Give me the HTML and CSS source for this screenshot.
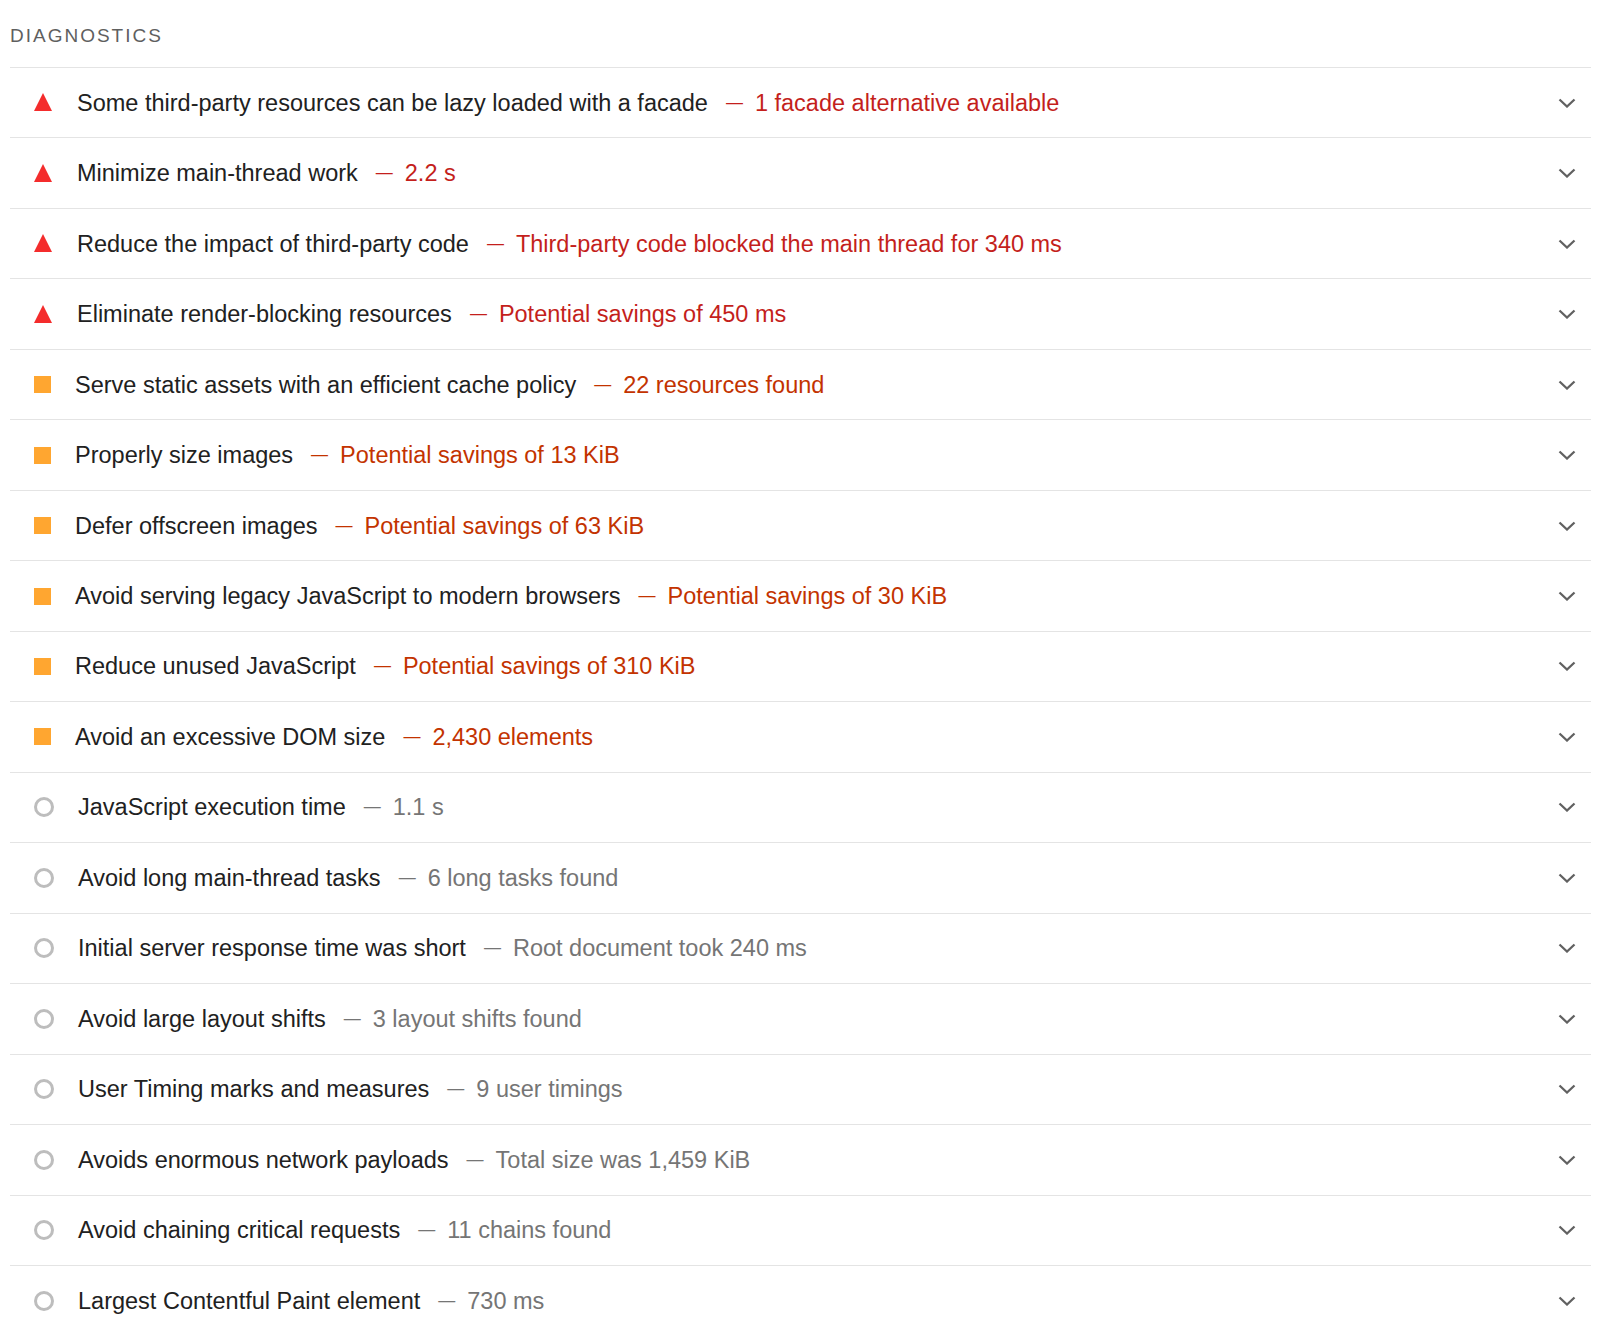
FILE: index.html
```html
<!DOCTYPE html>
<html lang="en">
<head>
<meta charset="utf-8">
<title>Diagnostics</title>
<link rel="stylesheet" href="styles.css">
</head>
<body>
<section class="group">
  <div class="group-header">DIAGNOSTICS</div>
  <div class="audits">
    <div class="audit fail"><span class="icon tri"></span><span class="title">Some third-party resources can be lazy loaded with a facade</span><span class="dash">—</span><span class="value">1 facade alternative available</span><svg class="chev" viewBox="0 0 18 10"><path d="M1.5 1.5 L9 8.5 L16.5 1.5"/></svg></div>
    <div class="audit fail"><span class="icon tri"></span><span class="title">Minimize main-thread work</span><span class="dash">—</span><span class="value">2.2 s</span><svg class="chev" viewBox="0 0 18 10"><path d="M1.5 1.5 L9 8.5 L16.5 1.5"/></svg></div>
    <div class="audit fail"><span class="icon tri"></span><span class="title">Reduce the impact of third-party code</span><span class="dash">—</span><span class="value">Third-party code blocked the main thread for 340 ms</span><svg class="chev" viewBox="0 0 18 10"><path d="M1.5 1.5 L9 8.5 L16.5 1.5"/></svg></div>
    <div class="audit fail"><span class="icon tri"></span><span class="title">Eliminate render-blocking resources</span><span class="dash">—</span><span class="value">Potential savings of 450 ms</span><svg class="chev" viewBox="0 0 18 10"><path d="M1.5 1.5 L9 8.5 L16.5 1.5"/></svg></div>
    <div class="audit average"><span class="icon sq"></span><span class="title">Serve static assets with an efficient cache policy</span><span class="dash">—</span><span class="value">22 resources found</span><svg class="chev" viewBox="0 0 18 10"><path d="M1.5 1.5 L9 8.5 L16.5 1.5"/></svg></div>
    <div class="audit average"><span class="icon sq"></span><span class="title">Properly size images</span><span class="dash">—</span><span class="value">Potential savings of 13 KiB</span><svg class="chev" viewBox="0 0 18 10"><path d="M1.5 1.5 L9 8.5 L16.5 1.5"/></svg></div>
    <div class="audit average"><span class="icon sq"></span><span class="title">Defer offscreen images</span><span class="dash">—</span><span class="value">Potential savings of 63 KiB</span><svg class="chev" viewBox="0 0 18 10"><path d="M1.5 1.5 L9 8.5 L16.5 1.5"/></svg></div>
    <div class="audit average"><span class="icon sq"></span><span class="title">Avoid serving legacy JavaScript to modern browsers</span><span class="dash">—</span><span class="value">Potential savings of 30 KiB</span><svg class="chev" viewBox="0 0 18 10"><path d="M1.5 1.5 L9 8.5 L16.5 1.5"/></svg></div>
    <div class="audit average"><span class="icon sq"></span><span class="title">Reduce unused JavaScript</span><span class="dash">—</span><span class="value">Potential savings of 310 KiB</span><svg class="chev" viewBox="0 0 18 10"><path d="M1.5 1.5 L9 8.5 L16.5 1.5"/></svg></div>
    <div class="audit average"><span class="icon sq"></span><span class="title">Avoid an excessive DOM size</span><span class="dash">—</span><span class="value">2,430 elements</span><svg class="chev" viewBox="0 0 18 10"><path d="M1.5 1.5 L9 8.5 L16.5 1.5"/></svg></div>
    <div class="audit info"><span class="icon ring"></span><span class="title">JavaScript execution time</span><span class="dash">—</span><span class="value">1.1 s</span><svg class="chev" viewBox="0 0 18 10"><path d="M1.5 1.5 L9 8.5 L16.5 1.5"/></svg></div>
    <div class="audit info"><span class="icon ring"></span><span class="title">Avoid long main-thread tasks</span><span class="dash">—</span><span class="value">6 long tasks found</span><svg class="chev" viewBox="0 0 18 10"><path d="M1.5 1.5 L9 8.5 L16.5 1.5"/></svg></div>
    <div class="audit info"><span class="icon ring"></span><span class="title">Initial server response time was short</span><span class="dash">—</span><span class="value">Root document took 240 ms</span><svg class="chev" viewBox="0 0 18 10"><path d="M1.5 1.5 L9 8.5 L16.5 1.5"/></svg></div>
    <div class="audit info"><span class="icon ring"></span><span class="title">Avoid large layout shifts</span><span class="dash">—</span><span class="value">3 layout shifts found</span><svg class="chev" viewBox="0 0 18 10"><path d="M1.5 1.5 L9 8.5 L16.5 1.5"/></svg></div>
    <div class="audit info"><span class="icon ring"></span><span class="title">User Timing marks and measures</span><span class="dash">—</span><span class="value">9 user timings</span><svg class="chev" viewBox="0 0 18 10"><path d="M1.5 1.5 L9 8.5 L16.5 1.5"/></svg></div>
    <div class="audit info"><span class="icon ring"></span><span class="title">Avoids enormous network payloads</span><span class="dash">—</span><span class="value">Total size was 1,459 KiB</span><svg class="chev" viewBox="0 0 18 10"><path d="M1.5 1.5 L9 8.5 L16.5 1.5"/></svg></div>
    <div class="audit info"><span class="icon ring"></span><span class="title">Avoid chaining critical requests</span><span class="dash">—</span><span class="value">11 chains found</span><svg class="chev" viewBox="0 0 18 10"><path d="M1.5 1.5 L9 8.5 L16.5 1.5"/></svg></div>
    <div class="audit info"><span class="icon ring"></span><span class="title">Largest Contentful Paint element</span><span class="dash">—</span><span class="value">730 ms</span><svg class="chev" viewBox="0 0 18 10"><path d="M1.5 1.5 L9 8.5 L16.5 1.5"/></svg></div>
  </div>
</section>
</body>
</html>
```
FILE: styles.css
```css
html, body {
  margin: 0;
  padding: 0;
  background: #ffffff;
}

body {
  font-family: "Liberation Sans", Arial, Helvetica, sans-serif;
  color: #212121;
}

.group {
  margin-left: 10px;
  width: 1581px;
}

.group-header {
  padding-top: 24px;
  padding-bottom: 19px;
  line-height: 24px;
  font-size: 19px;
  letter-spacing: 2px;
  color: #5f5f5f;
}

.audit {
  display: flex;
  align-items: center;
  height: 69.47px;
  border-top: 1px solid #e4e4e4;
  font-size: 23.5px;
  line-height: 28px;
}

.icon {
  flex: none;
  margin-left: 24px;
}

.tri {
  width: 0;
  height: 0;
  border-left: 9.5px solid transparent;
  border-right: 9.5px solid transparent;
  border-bottom: 18px solid #f42c2c;
  margin-right: 25px;
  margin-top: -1px;
}

.sq {
  width: 17px;
  height: 17px;
  background: #ffa630;
  margin-right: 24px;
}

.ring {
  width: 14px;
  height: 14px;
  border: 3px solid #bdbdbd;
  border-radius: 50%;
  margin-right: 24px;
  margin-left: 24px;
}

.title {
  white-space: nowrap;
}

.dash {
  margin-left: 18px;
  margin-right: 12px;
  font-size: 17px;
}

.value {
  white-space: nowrap;
}

.fail .dash, .fail .value {
  color: #c41f1c;
}

.average .dash, .average .value {
  color: #c33300;
}

.info .dash, .info .value {
  color: #757575;
}

.chev {
  margin-left: auto;
  margin-right: 15px;
  width: 18px;
  height: 10px;
  fill: none;
  stroke: #616161;
  stroke-width: 2.3;
}
```
